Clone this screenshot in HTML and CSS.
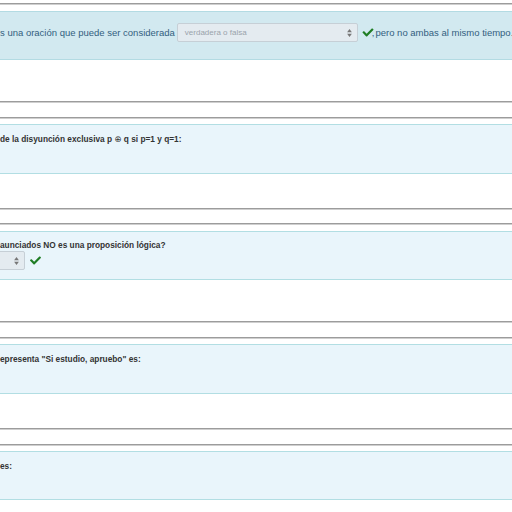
FILE: index.html
```html
<!DOCTYPE html>
<html lang="es">
<head>
<meta charset="utf-8">
<title>Revisión del intento</title>
<link rel="stylesheet" href="styles.css">
</head>
<body>
<div class="page">
  <section class="que q1">
    <div class="rule"></div>
    <div class="box box-main">
      <span class="txt">s una oración que puede ser considerada</span>
      <span class="select wide"><span class="sel-text">verdadera o falsa</span><svg class="arrows" viewBox="0 0 6 10" width="5" height="8"><path d="M3 0 L6 4 L0 4 Z M0 6 L6 6 L3 10 Z" fill="#777"/></svg></span>
      <svg class="check small" viewBox="0 0 512 512" width="12" height="11"><path d="M173.9 439.4l-166.4-166.4c-10-10-10-26.2 0-36.2l36.2-36.2c10-10 26.2-10 36.2 0L192 312.7 432.1 72.6c10-10 26.2-10 36.2 0l36.2 36.2c10 10 10 26.2 0 36.2l-294.4 294.4c-10 10-26.2 10-36.2 0z"/></svg><span class="txt comma">,</span><span class="txt tail">pero no ambas al mismo tiempo.</span>
    </div>
    <div class="rule after-long"></div>
  </section>

  <section class="que q2">
    <div class="rule"></div>
    <div class="box box-q">
      <p class="qtext">de la disyunción exclusiva p <span class="op">⊕</span> q si p=1 y q=1:</p>
    </div>
    <div class="rule after-short"></div>
  </section>

  <section class="que q3">
    <div class="rule"></div>
    <div class="box box-q box-q3">
      <p class="qtext">aunciados NO es una proposición lógica?</p>
      <div class="answer">
        <span class="select cut"><svg class="arrows" viewBox="0 0 6 10" width="5" height="8"><path d="M3 0 L6 4 L0 4 Z M0 6 L6 6 L3 10 Z" fill="#777"/></svg></span>
        <svg class="check big" viewBox="0 0 512 512" width="13" height="11"><path d="M173.9 439.4l-166.4-166.4c-10-10-10-26.2 0-36.2l36.2-36.2c10-10 26.2-10 36.2 0L192 312.7 432.1 72.6c10-10 26.2-10 36.2 0l36.2 36.2c10 10 10 26.2 0 36.2l-294.4 294.4c-10 10-26.2 10-36.2 0z"/></svg>
      </div>
    </div>
    <div class="rule after-long"></div>
  </section>

  <section class="que q4">
    <div class="rule"></div>
    <div class="box box-q">
      <p class="qtext">epresenta "Si estudio, apruebo" es:</p>
    </div>
    <div class="rule after-short"></div>
  </section>

  <section class="que q5">
    <div class="rule"></div>
    <div class="box box-q">
      <p class="qtext">es:</p>
    </div>
  </section>
</div>
</body>
</html>
```

FILE: styles.css
```css
html, body {
  margin: 0;
  padding: 0;
  background: #ffffff;
  overflow: hidden;
}

body {
  font-family: "Liberation Sans", Arial, sans-serif;
  width: 512px;
  height: 512px;
}

.page {
  display: flex;
  flex-direction: column;
  width: 512px;
}

.que {
  display: flex;
  flex-direction: column;
}

.q1 { margin-top: 3px; }
.q2 { margin-top: 14px; }
.q3 { margin-top: 13px; }
.q4 { margin-top: 14px; }
.q5 { margin-top: 14px; }

.rule {
  height: 1px;
  background: #9c9c9c;
  border-bottom: 1px solid #cfcfcf;
}

.rule.after-long { margin-top: 41px; }
.rule.after-short { margin-top: 34px; }

.box {
  box-sizing: border-box;
  white-space: nowrap;
  overflow: hidden;
}

.box-main {
  margin-top: 6px;
  width: 512px;
  height: 49px;
  background: #d2e9f0;
  border-top: 1px solid #b3dbe3;
  border-bottom: 1px solid #b3dbe3;
  padding-top: 11px;
  display: flex;
  align-items: flex-start;
}

.box-main .txt {
  font-size: 9.5px;
  color: #33607f;
  line-height: 20px;
  flex: none;
}

.box-main .comma {
  margin-left: -2px;
}

.box-main .tail {
  margin-left: 1px;
}

.select {
  box-sizing: border-box;
  height: 19px;
  background: #e4ebf0;
  border: 1px solid #c6cfd6;
  border-radius: 2px;
  display: flex;
  align-items: center;
  justify-content: space-between;
  flex: none;
}

.select.wide {
  width: 181px;
  margin-left: 2px;
  padding: 0 5px 0 7px;
}

.sel-text {
  font-size: 8px;
  color: #9aa3ab;
}

.arrows {
  display: block;
}

.check {
  display: block;
  fill: #1f7d24;
  flex: none;
}

.check.small {
  margin-left: 4px;
  margin-top: 4px;
}

.box-q {
  margin-top: 5px;
  height: 50px;
  background: #e9f5fb;
  border-top: 1px solid #b2dee3;
  border-bottom: 1px solid #b2dee3;
  padding-top: 8px;
}

.box-q3 {
  margin-top: 6px;
  height: 49px;
  padding-top: 7px;
}

.q5 .box-q {
  height: 49px;
}

.qtext {
  margin: 0;
  font-size: 8.3px;
  font-weight: bold;
  color: #333333;
  line-height: 12px;
}

.op {
  font-family: "DejaVu Sans", sans-serif;
  font-weight: normal;
  font-size: 8.5px;
}

.answer {
  display: flex;
  align-items: center;
}

.select.cut {
  width: 125px;
  margin-left: -100px;
  padding: 0 5px 0 7px;
  justify-content: flex-end;
}

.check.big {
  margin-left: 4px;
}
```
